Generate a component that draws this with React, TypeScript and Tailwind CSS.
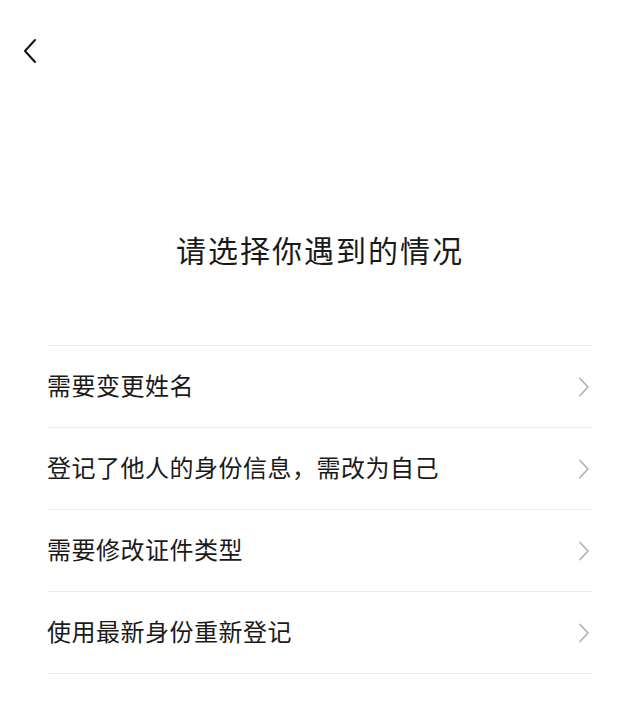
const OPTIONS = [
  '需要变更姓名',
  '登记了他人的身份信息，需改为自己',
  '需要修改证件类型',
  '使用最新身份重新登记',
]

function ArrowRight() {
  return (
    <svg width="12" height="20" viewBox="0 0 12 20" fill="none" className="shrink-0">
      <path d="M2 1.5 L10 10 L2 18.5" stroke="#b3b3b3" strokeWidth="1.8" strokeLinecap="round" strokeLinejoin="round" />
    </svg>
  )
}

export default function App() {
  return (
    <div
      className="min-h-[707px] w-[640px] bg-white text-[#1a1a1a]"
      style={{ fontFamily: '"Noto Sans CJK SC", "Noto Sans", sans-serif' }}
    >
      <div className="flex h-[102px] items-start pl-[18px] pt-[36px]">
        <button type="button" className="flex h-[30px] w-[24px] items-center justify-center">
          <svg width="14" height="26" viewBox="0 0 14 26" fill="none">
            <path d="M12 2 L2 13 L12 24" stroke="#111" strokeWidth="2" strokeLinecap="round" strokeLinejoin="round" />
          </svg>
        </button>
      </div>

      <h1 className="mt-[123px] text-center text-[30px] leading-[48px] tracking-[2px] text-[#1a1a1a]">
        请选择你遇到的情况
      </h1>

      <ul className="mx-[47px] mt-[72px] border-b border-[#ececec]">
        {OPTIONS.map((label) => (
          <li
            key={label}
            className="flex h-[82px] items-center justify-between border-t border-[#ececec] pr-[3px]"
          >
            <span className="-mt-[3px] text-[24px] tracking-[0.5px] text-[#1a1a1a]">{label}</span>
            <ArrowRight />
          </li>
        ))}
      </ul>
    </div>
  )
}
